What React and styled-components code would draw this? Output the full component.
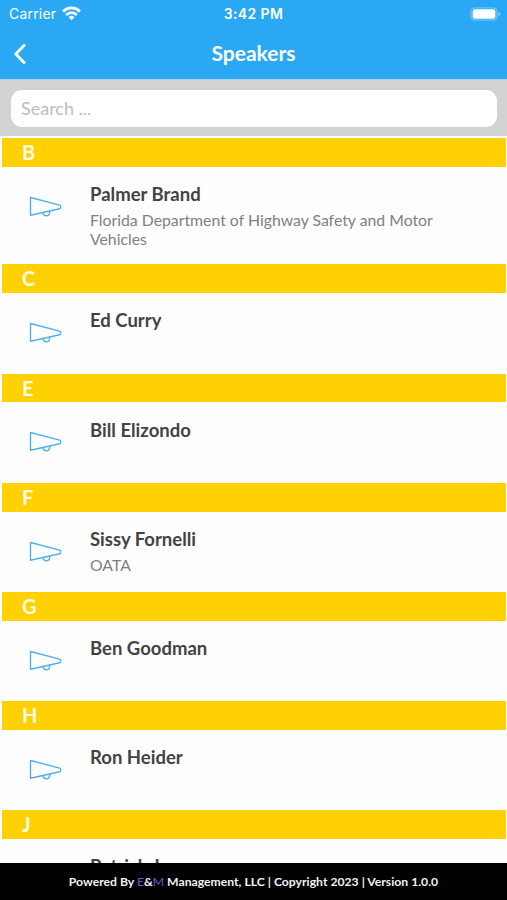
import React, { useState } from 'react'
import styled, { createGlobalStyle } from 'styled-components'

const sections = [
  {
    letter: 'B',
    speakers: [
      { name: 'Palmer Brand', company: 'Florida Department of Highway Safety and Motor Vehicles' }
    ]
  },
  { letter: 'C', speakers: [{ name: 'Ed Curry' }] },
  { letter: 'E', speakers: [{ name: 'Bill Elizondo' }] },
  { letter: 'F', speakers: [{ name: 'Sissy Fornelli', company: 'OATA' }] },
  { letter: 'G', speakers: [{ name: 'Ben Goodman' }] },
  { letter: 'H', speakers: [{ name: 'Ron Heider' }] },
  { letter: 'J', speakers: [{ name: 'Patrick J' }] }
]

const WifiIcon = () => (
  <svg width="19" height="15" viewBox="0 0 19 15" fill="none" stroke="#fff" strokeWidth="2.8">
    <path d="M1.1 5.4a12 12 0 0 1 16.8 0" />
    <path d="M4.2 8.9a7.5 7.5 0 0 1 10.6 0" />
    <path d="M9.5 14.3L6.5 11.3a4.3 4.3 0 0 1 6 0z" fill="#fff" stroke="none" />
  </svg>
)

const BatteryIcon = () => (
  <svg width="31" height="14" viewBox="0 0 31 14">
    <rect x="0.9" y="0.9" width="26.2" height="12.2" rx="4" fill="none" stroke="#fff" strokeOpacity="0.32" strokeWidth="1.4" />
    <rect x="2.6" y="2.3" width="22.8" height="9.4" rx="2.2" fill="#fff" />
    <path d="M28.7 5v4.2c.9-.4 1.5-1.2 1.5-2.1s-.6-1.7-1.5-2.1z" fill="#fff" fillOpacity="0.45" />
  </svg>
)

const BackIcon = () => (
  <svg width="14" height="22" viewBox="0 0 14 22" fill="none" stroke="#fff" strokeWidth="2.8">
    <path d="M12 1.6L2.8 11l9.2 9.4" />
  </svg>
)

const MegaphoneIcon = () => (
  <svg width="36" height="22" viewBox="0 0 36 22" fill="none" stroke="#4fb0ef" strokeWidth="1.4" strokeLinejoin="round">
    <path d="M4.5 1.5L33.6 9.1c.7.2 1 .5 1 1.1v1.5c0 .6-.3.9-1 1.1L4.5 19.2z" />
    <path d="M17 16.4c.2 2.2 1.5 3.4 3.3 3.4 2.1 0 3.5-1.7 3.5-4.9" />
  </svg>
)

const App = () => {
  const [search, setSearch] = useState('')

  const visible = sections
    .map((section) => ({
      ...section,
      speakers: section.speakers.filter(({ name }) => name.toLowerCase().includes(search.toLowerCase()))
    }))
    .filter((section) => section.speakers.length > 0)

  return (
    <Screen>
      <GlobalStyle />
      <Header>
        <StatusBar>
          <Carrier>
            Carrier
            <WifiIcon />
          </Carrier>
          <Clock>3:42 PM</Clock>
          <Battery>
            <BatteryIcon />
          </Battery>
        </StatusBar>
        <NavBar>
          <BackButton type="button" aria-label="Back">
            <BackIcon />
          </BackButton>
          <Title>Speakers</Title>
        </NavBar>
      </Header>

      <SearchBar>
        <SearchInput
          type="text"
          value={search}
          placeholder="Search ..."
          onChange={(e) => setSearch(e.target.value)}
        />
      </SearchBar>

      <List>
        {visible.map((section) => (
          <React.Fragment key={section.letter}>
            <SectionHeader>{section.letter}</SectionHeader>
            {section.speakers.map((speaker) => (
              <SpeakerRow key={speaker.name}>
                <MegaphoneIcon />
                <SpeakerInfo>
                  <Name>{speaker.name}</Name>
                  {speaker.company && <Company>{speaker.company}</Company>}
                </SpeakerInfo>
              </SpeakerRow>
            ))}
          </React.Fragment>
        ))}
      </List>

      <Footer>
        <p>
          Powered By <Brand>E</Brand>&amp;<Brand>M</Brand> Management, LLC | Copyright 2023 | Version 1.0.0
        </p>
      </Footer>
    </Screen>
  )
}

export default App

const GlobalStyle = createGlobalStyle`
  * {
    box-sizing: border-box;
  }

  body, p, h1, h2, h3 {
    margin: 0;
  }

  body {
    font-family: Lato, sans-serif;
  }
`

const Screen = styled.div`
  display: flex;
  flex-direction: column;
  height: 100vh;
  overflow: hidden;
  background-color: #fefefe;
`

const Header = styled.header`
  flex: none;
  height: 80px;
  background-color: #2aa8f4;
  border-bottom: 1px solid #a9d3ee;
  color: #fff;
`

const StatusBar = styled.div`
  display: grid;
  grid-template-columns: 1fr auto 1fr;
  align-items: center;
  height: 27px;
  padding: 0 6px 0 9px;
  font-family: Inter, sans-serif;
`

const Carrier = styled.div`
  display: flex;
  align-items: center;
  gap: 6px;
  font-size: 14px;
  letter-spacing: 0.2px;

  svg {
    margin-bottom: 1px;
  }
`

const Clock = styled.div`
  margin-right: 3px;
  font-size: 14px;
  font-weight: 600;
  letter-spacing: 0.4px;
`

const Battery = styled.div`
  display: flex;
  justify-content: flex-end;
`

const NavBar = styled.div`
  display: grid;
  grid-template-columns: 40px 1fr 40px;
  align-items: center;
  height: 53px;
`

const BackButton = styled.button`
  display: flex;
  padding: 0 0 0 13px;
  border: 0;
  background: none;
  cursor: pointer;
`

const Title = styled.h1`
  padding-bottom: 2px;
  font-size: 21px;
  font-weight: 700;
  line-height: 26px;
  text-align: center;
`

const SearchBar = styled.div`
  flex: none;
  height: 56px;
  padding: 10px 10px 9px 11px;
  background-color: #d2d2d2;
`

const SearchInput = styled.input`
  display: block;
  width: 100%;
  height: 37px;
  padding: 0 10px 1px;
  border: 0;
  border-radius: 11px;
  background-color: #fff;
  font-family: inherit;
  font-size: 18px;
  color: #444;

  &::placeholder {
    color: #bdbdbd;
  }
`

const List = styled.main`
  flex: 1;
  min-height: 0;
  overflow: hidden;
  padding: 2px 1.5px 0 2px;
`

const SectionHeader = styled.h2`
  height: 28.8px;
  padding-left: 20px;
  background-color: #ffd103;
  color: #fffbe6;
  font-size: 20px;
  font-weight: 700;
  line-height: 29px;
`

const SpeakerRow = styled.article`
  display: flex;
  align-items: flex-start;
  min-height: 80.35px;
  padding: 16.2px 40px 15.7px 26.5px;

  > svg {
    flex: none;
    margin: 12.8px 0.6px 0 -2.6px;
  }
`

const SpeakerInfo = styled.div`
  padding-left: 27.5px;
`

const Name = styled.h3`
  font-size: 18.5px;
  font-weight: 700;
  line-height: 23px;
  color: #434343;
`

const Company = styled.p`
  margin-top: 4px;
  font-size: 15.8px;
  line-height: 19.4px;
  color: #808080;
`

const Footer = styled.footer`
  display: flex;
  flex: none;
  align-items: center;
  justify-content: center;
  height: 37px;
  background-color: #000;
  color: #f2f2f2;
  font-size: 12.2px;
  font-weight: 700;
`

const Brand = styled.span`
  font-weight: 400;
  color: #6a5acd;
`
